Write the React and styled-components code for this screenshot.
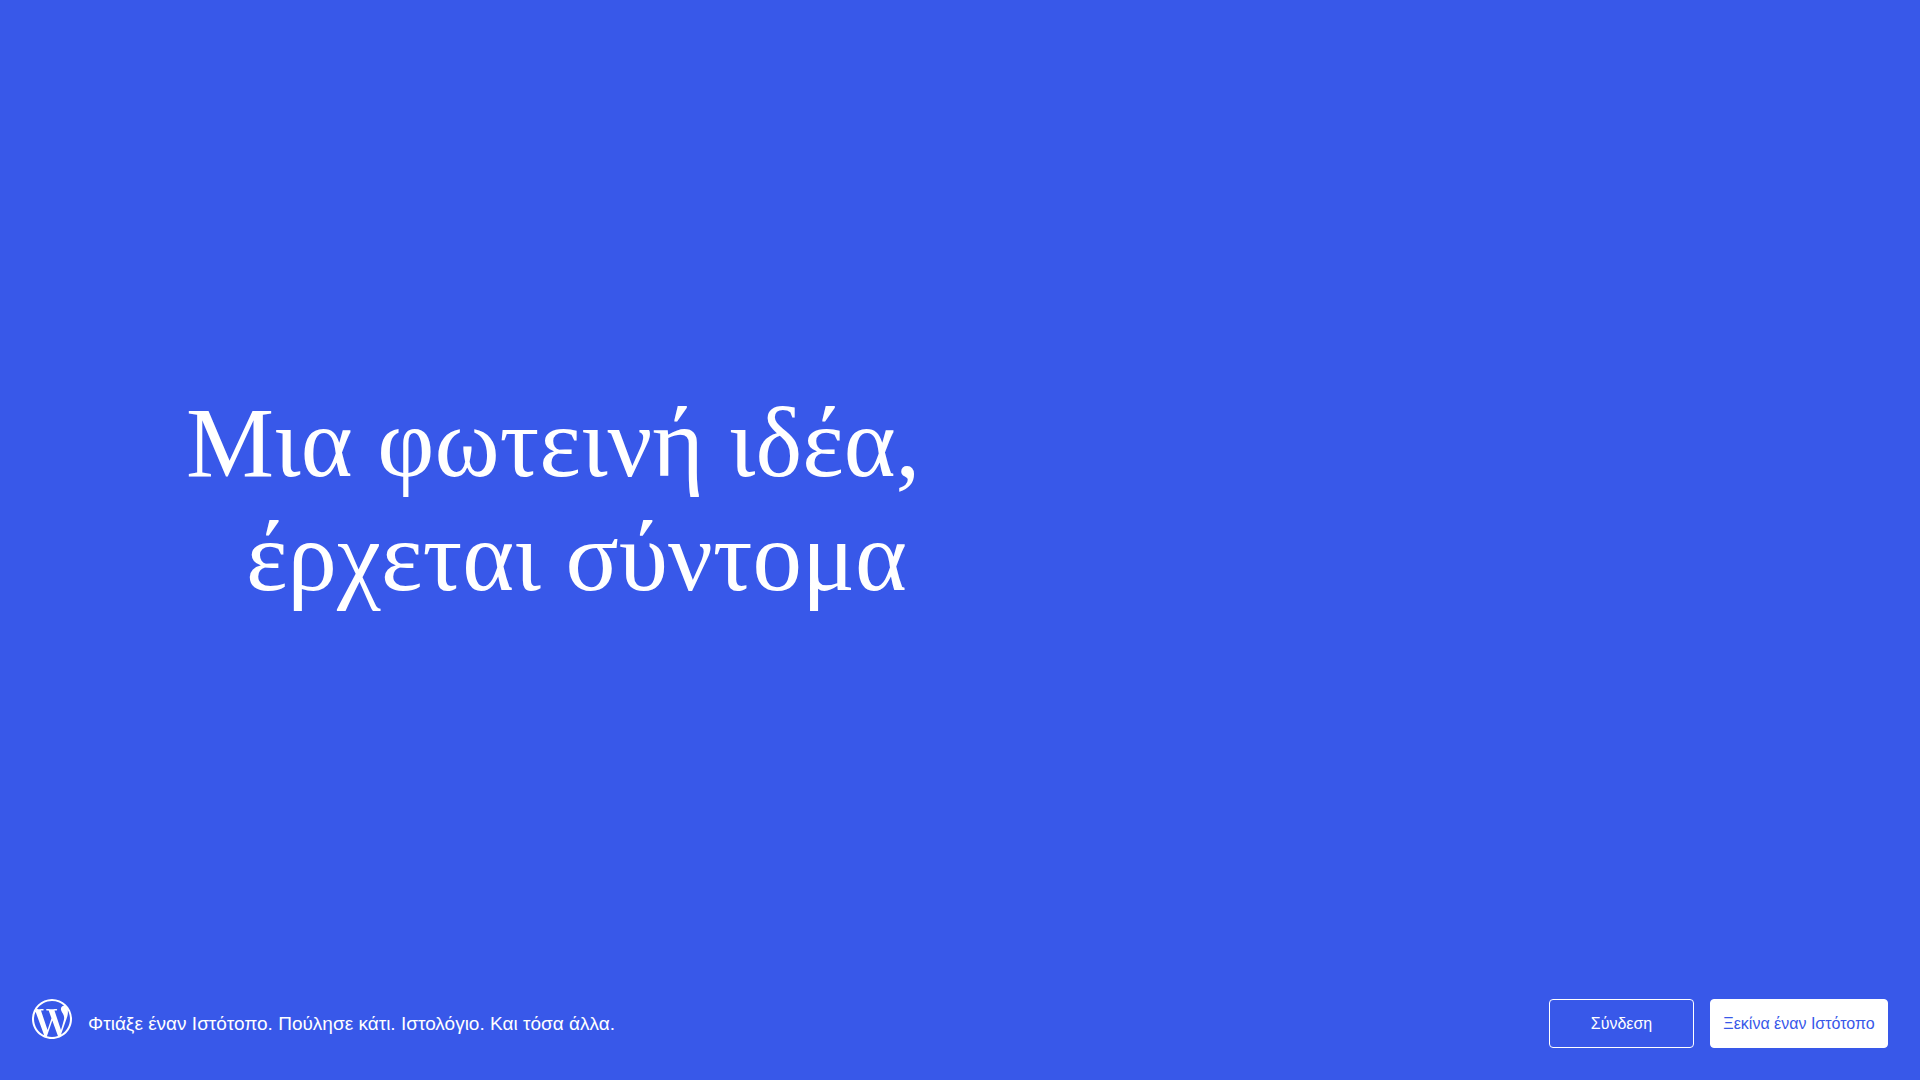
import React from 'react'
import styled, { createGlobalStyle } from 'styled-components'
import { FaWordpressSimple } from 'react-icons/fa'

const GlobalStyle = createGlobalStyle`
  *, *::before, *::after {
    box-sizing: border-box;
  }
  body {
    margin: 0;
    background-color: #3858e9;
  }
`;

const Page = styled.div`
  min-height: 100vh;
  display: flex;
  flex-direction: column;
  color: #fff;
  font-family: "Liberation Sans", Arial, sans-serif;
`;

const Main = styled.main`
  flex: 1;
  display: flex;
  align-items: center;
  padding: 32px 186px 0;

  @media (max-width: 1024px) {
    padding: 32px 32px 0;
  }
`;

const Title = styled.h1`
  margin: 0;
  font-family: "Liberation Serif", "Times New Roman", serif;
  font-size: 99px;
  font-weight: 400;
  line-height: 114px;

  @media (max-width: 1024px) {
    font-size: 56px;
    line-height: 64px;
  }
`;

const Line = styled.span`
  display: block;
  padding-left: ${(props) => (props.$indent ? '60px' : '0')};
`;

const Footer = styled.footer`
  display: flex;
  flex-wrap: wrap;
  justify-content: space-between;
  gap: 16px;
  padding: 32px;
`;

const Brand = styled.a`
  display: flex;
  align-items: center;
  gap: 16px;
  color: inherit;
  font-size: 19px;
  line-height: 24px;
  text-decoration: none;
`;

const Logo = styled(FaWordpressSimple)`
  flex: none;
  align-self: flex-start;
  width: 40px;
  height: 40px;
`;

const Actions = styled.div`
  display: flex;
  gap: 16px;
`;

const Button = styled.button`
  min-width: ${(props) => (props.$primary ? '178px' : '145px')};
  height: 49px;
  padding: 0 12px;
  border: 1px solid #fff;
  border-radius: 4px;
  background-color: ${(props) => (props.$primary ? '#fff' : 'transparent')};
  color: ${(props) => (props.$primary ? '#3858e9' : '#fff')};
  font-family: inherit;
  font-size: 16px;
  cursor: pointer;
`;

const App = () => {
  return (
    <Page>
      <GlobalStyle />
      <Main>
        <Title>
          <Line>Μια φωτεινή ιδέα,</Line>
          <Line $indent>έρχεται σύντομα</Line>
        </Title>
      </Main>
      <Footer>
        <Brand href="#">
          <Logo viewBox="8 8 496 496" aria-hidden="true" />
          <span>Φτιάξε έναν Ιστότοπο. Πούλησε κάτι. Ιστολόγιο. Και τόσα άλλα.</span>
        </Brand>
        <Actions>
          <Button type="button">Σύνδεση</Button>
          <Button type="button" $primary>Ξεκίνα έναν Ιστότοπο</Button>
        </Actions>
      </Footer>
    </Page>
  );
}

export default App
